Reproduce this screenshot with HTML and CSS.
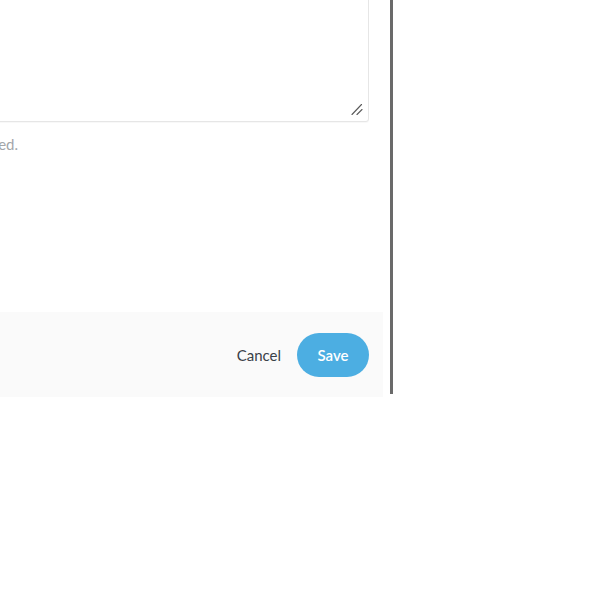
FILE: index.html
```html
<!DOCTYPE html>
<html lang="en">
<head>
<meta charset="utf-8">
<title>Edit note</title>
<link rel="stylesheet" href="styles.css">
</head>
<body>
<div class="stage">
  <div class="panel">
    <div class="panel-body">
      <div class="field">
        <textarea class="note-input" aria-label="Note"></textarea>
        <svg class="grip" width="12" height="12" viewBox="0 0 12 12" aria-hidden="true">
          <line x1="1" y1="11.5" x2="10.5" y2="1.5" stroke="#5a5a5a" stroke-width="1.1" stroke-linecap="round"/>
          <line x1="6" y1="11.5" x2="11" y2="6.5" stroke="#5a5a5a" stroke-width="1.1" stroke-linecap="round"/>
        </svg>
      </div>
      <div class="hint"><span>This note will only be seen by people you have invited.</span></div>
    </div>
    <div class="panel-footer">
      <button class="btn-cancel" type="button">Cancel</button>
      <button class="btn-save" type="button">Save</button>
    </div>
  </div>
  <div class="divider"></div>
</div>
</body>
</html>
```

FILE: styles.css
```css
html, body {
  margin: 0;
  padding: 0;
  background: #ffffff;
}

body {
  font-family: Lato, "Open Sans", "Liberation Sans", sans-serif;
  color: #333b42;
}

.stage {
  display: flex;
  align-items: flex-start;
  gap: 7px;
}

.panel {
  flex: none;
  width: 383px;
  background: #ffffff;
}

.panel-body {
  padding: 0 14px 0 0;
}

.field {
  position: relative;
  margin: -10px 0 0 -20px;
}

.note-input {
  display: block;
  box-sizing: border-box;
  margin: 0;
  width: 100%;
  height: 132px;
  border: 1px solid #e6e6e6;
  border-radius: 3px;
  box-shadow: 0 1px 1px rgba(0, 0, 0, 0.03);
  background: #ffffff;
  font: inherit;
  resize: none;
  outline: none;
}

.grip {
  position: absolute;
  right: 6px;
  bottom: 7px;
}

.hint {
  display: flex;
  justify-content: flex-end;
  width: 18px;
  margin-top: 12px;
  white-space: nowrap;
  font-size: 15px;
  line-height: 20px;
  color: #a2a6aa;
}

.panel-footer {
  margin-top: 158px;
  height: 85px;
  box-sizing: border-box;
  padding-right: 14px;
  display: flex;
  align-items: center;
  justify-content: flex-end;
  gap: 16px;
  background: #fafafa;
}

.btn-cancel {
  border: none;
  background: transparent;
  padding: 0;
  font-family: inherit;
  font-size: 15px;
  color: #3a4148;
  cursor: pointer;
}

.btn-save {
  border: none;
  width: 72px;
  height: 44px;
  border-radius: 22px;
  background: #4caee2;
  color: #ffffff;
  font-family: inherit;
  font-size: 15px;
  font-weight: 600;
  cursor: pointer;
}

.divider {
  flex: none;
  width: 3px;
  height: 394px;
  background: #6a6a6a;
}
```
